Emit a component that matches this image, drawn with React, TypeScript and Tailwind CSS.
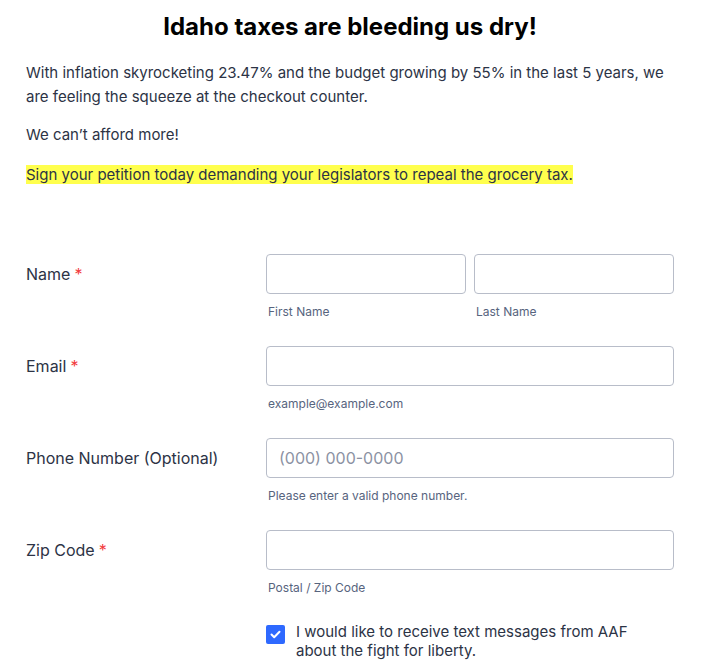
import React from 'react';

const Req = () => <span className="text-[#f23a3c] ml-1">*</span>;

const Field = ({ label, required, children }: { label: string; required?: boolean; children: React.ReactNode }) => (
  <div className="flex">
    <div className="w-[240px] pt-[8px] text-[16px] leading-[24px] text-[#2c3345]">
      {label}
      {required && <Req />}
    </div>
    <div className="flex-1">{children}</div>
  </div>
);

const Input = ({ placeholder }: { placeholder?: string }) => (
  <input
    placeholder={placeholder}
    className="w-full h-[40px] rounded-[4px] border border-[#b8bdc9] bg-white px-3 text-[16px] text-[#2c3345] placeholder:text-[#8c92a3] outline-none"
  />
);

const Sub = ({ children }: { children: React.ReactNode }) => (
  <div className="mt-[10px] pl-[2px] text-[12px] leading-[16px] text-[#57647e]">{children}</div>
);

export default function App() {
  return (
    <div className="min-h-screen bg-white font-['Inter',sans-serif] text-[#2c3345]">
      <div className="pl-[26px] pr-[43px] pt-[9px]">
        <h1 className="text-center text-[24px] leading-[36px] font-bold text-black">Idaho taxes are bleeding us dry!</h1>
        <p className="mt-[16px] text-[15px] leading-[24px]">
          With inflation skyrocketing 23.47% and the budget growing by 55% in the last 5 years, we are feeling the squeeze at the checkout counter.
        </p>
        <p className="mt-[14px] text-[15px] leading-[24px]">We can’t afford more!</p>
        <p className="mt-[16px] text-[15px] leading-[24px]">
          <span className="bg-[#ffff4d]">Sign your petition today demanding your legislators to repeal the grocery tax.</span>
        </p>
      </div>

      <div className="mt-[67px] pl-[26px] pr-[43px] flex flex-col gap-[26px]">
        <Field label="Name" required>
          <div className="grid grid-cols-2 gap-[8px]">
            <div>
              <Input />
              <Sub>First Name</Sub>
            </div>
            <div>
              <Input />
              <Sub>Last Name</Sub>
            </div>
          </div>
        </Field>
        <Field label="Email" required>
          <Input />
          <Sub>example@example.com</Sub>
        </Field>
        <Field label="Phone Number (Optional)">
          <Input placeholder="(000) 000-0000" />
          <Sub>Please enter a valid phone number.</Sub>
        </Field>
        <Field label="Zip Code" required>
          <Input />
          <Sub>Postal / Zip Code</Sub>
        </Field>
      </div>

      <div className="mt-[26px] pl-[266px] flex items-start gap-[11px]">
        <div className="mt-[3px] w-[19px] h-[19px] rounded-[2px] bg-[#2e69ff] flex items-center justify-center shrink-0">
          <svg width="11" height="9" viewBox="0 0 11 9" fill="none">
            <path d="M1.5 4.5L4.2 7.2L9.5 1.8" stroke="white" strokeWidth="2" strokeLinecap="round" strokeLinejoin="round" />
          </svg>
        </div>
        <div className="text-[15px] leading-[19px] text-[#2c3345]">
          I would like to receive text messages from AAF
          <br />
          about the fight for liberty.
        </div>
      </div>
    </div>
  );
}
